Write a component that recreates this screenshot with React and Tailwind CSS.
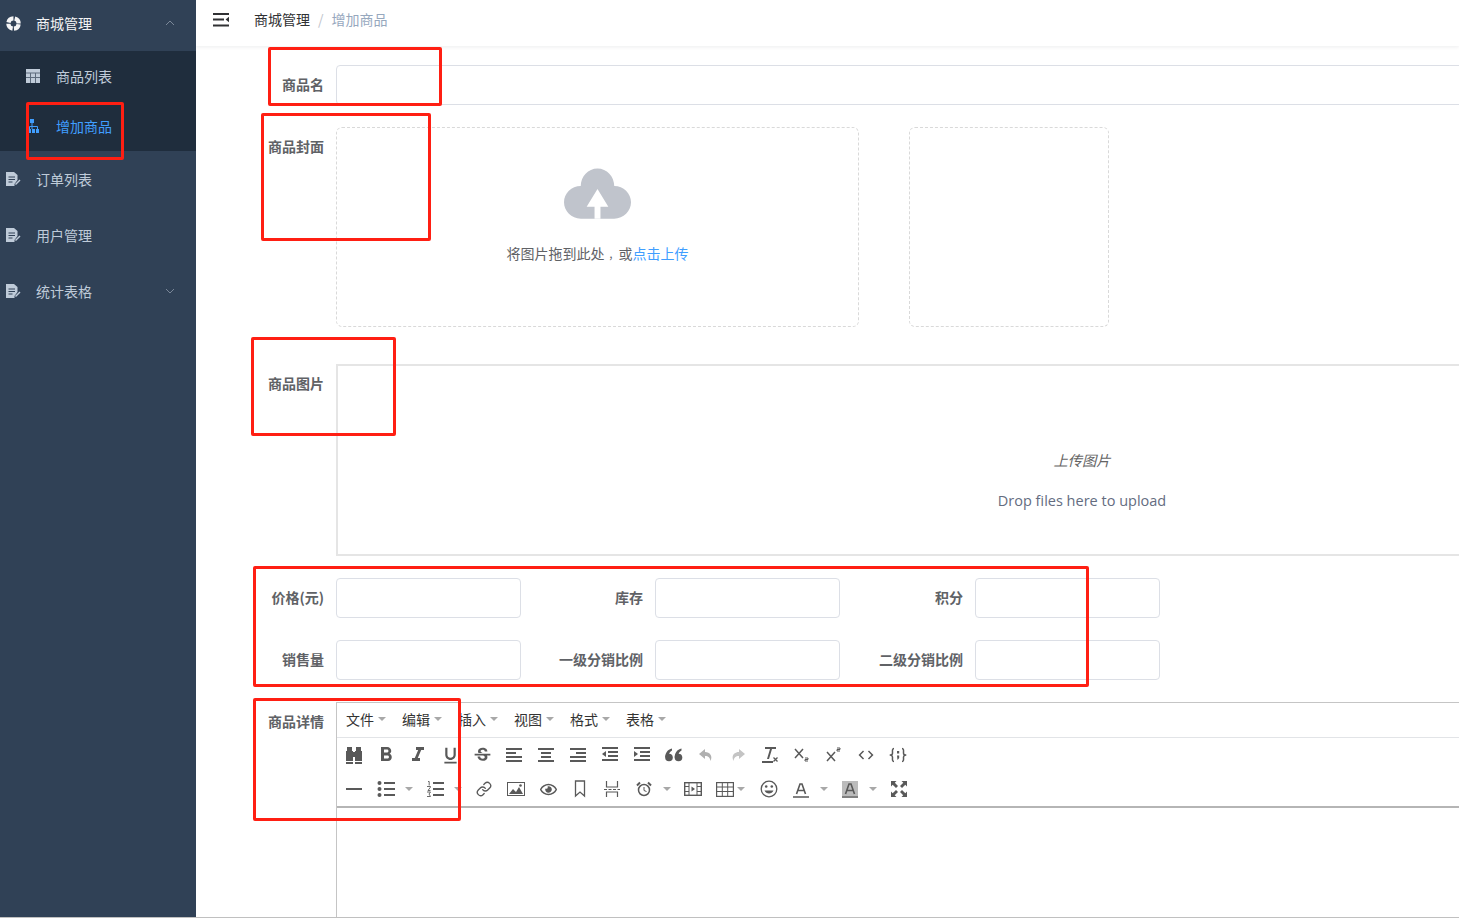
import React from "react";
import { MdFormatBold, MdFormatItalic, MdFormatUnderlined, MdStrikethroughS, MdCode } from "react-icons/md";
import { FaRegEye } from "react-icons/fa";
import { Link as LinkIcon } from "lucide-react";

const FONT = "font-['Noto_Sans_CJK_SC','Liberation_Sans',sans-serif]";
const C = "#595959";

function Ring() {
  return (
    <svg width="15" height="15" viewBox="0 0 16 16" className="shrink-0">
      <circle cx="8" cy="8" r="5.500" fill="none" stroke="#f4f4f5" strokeWidth="4.500" strokeDasharray="7.2 1.440" strokeDashoffset="-0.720" />
    </svg>
  );
}
function DocIcon() {
  return (
    <svg width="15" height="14" viewBox="0 0 15 14" className="shrink-0">
      <path d="M0 0h8l3.500 3v5l-3 4v2H0z" fill="#bfcbd9" />
      <path d="M2.500 5h6.500M2.500 7.500h6.500M2.500 10h4" stroke="#304156" strokeWidth="1" />
      <path d="M9 12l4.500-4.500 1 1L10 13z" fill="#bfcbd9" />
    </svg>
  );
}
function TableSide() {
  return (
    <svg width="14" height="14" viewBox="0 0 14 14" className="shrink-0">
      <rect width="14" height="14" fill="#bfcbd9" />
      <path d="M0 4h14M4.500 4v10M9.500 4v10M0 8.500h14" stroke="#5d6b7c" strokeWidth="1" />
    </svg>
  );
}
function SiteMap() {
  return (
    <svg width="11" height="14" viewBox="0 0 11 14" className="shrink-0">
      <rect x="2" y="0" width="4" height="4" fill="#409eff" />
      <rect x="0" y="10" width="3" height="4" fill="#409eff" />
      <rect x="4" y="10" width="3" height="4" fill="#409eff" />
      <rect x="8" y="10" width="3" height="4" fill="#409eff" />
      <path d="M1.500 10V7.500h8V10M4 4v6" stroke="#409eff" fill="none" />
    </svg>
  );
}
function Chevron({ up }) {
  return (
    <svg width="10" height="6" viewBox="0 0 10 6" className="shrink-0">
      <path d={up ? "M1 5l4-4 4 4" : "M1 1l4 4 4-4"} fill="none" stroke="#7a8798" strokeWidth="1" />
    </svg>
  );
}
function Hamburger() {
  return (
    <svg width="16" height="14" viewBox="0 0 16 14">
      <path d="M0 1h16M0 6.500h11M0 12.500h16" stroke="#303133" strokeWidth="2" />
      <path d="M16 3.800v5.400l-3.400-2.700z" fill="#303133" />
    </svg>
  );
}
function Cloud() {
  return (
    <svg width="67" height="51" viewBox="0 0 68 51">
      <path d="M17 51C7.600 51 0 43.600 0 34.500 0 25.400 7.600 18 17 18c0-10 7.600-18 17-18s17 8 17 18c9.400 0 17 7.400 17 16.500S60.400 51 51 51z" fill="#c0c4cc" />
      <path d="M34 21l11 18h-8v12h-6V39h-8z" fill="#fff" />
    </svg>
  );
}

function Binoculars() {
  return (
    <svg width="18" height="17" viewBox="0 0 18 17">
      <rect x="2" y="0" width="5" height="4" fill={C} />
      <rect x="11" y="0" width="5" height="4" fill={C} />
      <rect x="1" y="4" width="7" height="13" fill={C} />
      <rect x="10" y="4" width="7" height="13" fill={C} />
      <rect x="8" y="5" width="2" height="5" fill={C} />
      <rect x="1" y="14" width="7" height="1" fill="#fff" />
      <rect x="10" y="14" width="7" height="1" fill="#fff" />
    </svg>
  );
}
function Quote() {
  return (
    <svg width="18" height="14" viewBox="0 0 18 14">
      <g fill={C}>
        <circle cx="4" cy="9.500" r="3.800" />
        <path d="M.2 9.500C.2 5 2.500 1.500 7 .5v2C5 3.500 4 5.500 4 7z" />
        <circle cx="13.500" cy="9.500" r="3.800" />
        <path d="M9.700 9.500C9.700 5 12 1.500 16.500 .5v2c-2 1-3 3-3 4.500z" />
      </g>
    </svg>
  );
}
function Lines({ rows }) {
  return (
    <svg width="18" height="16" viewBox="0 0 18 16">
      {rows.map((r, i) => (
        <rect key={i} x={r[0]} y={r[1]} width={r[2]} height="2" fill={C} />
      ))}
    </svg>
  );
}
const alignLeft = [[1, 1, 16], [1, 5, 10], [1, 9, 16], [1, 13, 16]];
const alignCenter = [[1, 1, 16], [4, 5, 10], [4, 9, 10], [1, 13, 16]];
const alignRight = [[1, 1, 16], [7, 5, 10], [1, 9, 16], [1, 13, 16]];

function Indent({ out }) {
  return (
    <svg width="18" height="16" viewBox="0 0 18 16">
      <path d="M1 1h16M7 5h10M7 9h10M1 13h16" stroke={C} strokeWidth="2" />
      <path d={out ? "M5 4v6L1 7z" : "M1 4v6l4-3z"} fill={C} />
    </svg>
  );
}
function Undo({ color = "#b0b0b0" }) {
  return (
    <svg width="16" height="16" viewBox="0 0 16 16">
      <path d="M7 2L1 7l6 5V9c3.500 0 5 1.500 5.500 5C15 9 12 5 7 5z" fill={color} />
    </svg>
  );
}
function Redo() {
  return <span className="inline-flex -scale-x-100"><Undo color="#c4c4c4" /></span>;
}
function ClearFmt() {
  return (
    <svg width="18" height="18" viewBox="0 0 18 18">
      <path d="M4 1h11v2h-4L8 13H6L9 3H4zM1 15h11v2H1z" fill={C} />
      <path d="M12.500 11.500l4 4M16.500 11.500l-4 4" stroke={C} strokeWidth="1.300" />
    </svg>
  );
}
function Script({ sup }) {
  return (
    <svg width="16" height="16" viewBox="0 0 16 16">
      <path d={sup ? "M1 5l8 9M9 5l-8 9" : "M1 2l8 9M9 2l-8 9"} stroke={C} strokeWidth="1.500" fill="none" />
      <path d={sup ? "M11 1h3v1.500h-3V4h3" : "M11 11h3v1.500h-3V14h3"} stroke={C} strokeWidth="1" fill="none" />
    </svg>
  );
}
function CodeSample() {
  return (
    <svg width="18" height="16" viewBox="0 0 18 16">
      <path d="M5 1.500C3 1.500 3.500 4 3.500 6S2.500 8 1.500 8s2 0 2 2-.5 4.500 1.500 4.500M13 1.500c2 0 1.500 2.500 1.500 4.500s1 2 2 2-2 0-2 2 .5 4.500-1.500 4.500" fill="none" stroke={C} strokeWidth="1.500" />
      <rect x="8" y="4" width="2.200" height="2.500" fill={C} />
      <path d="M8 8.500h2.200v2.500L8.500 13z" fill={C} />
    </svg>
  );
}
function Hr() { return <svg width="18" height="16" viewBox="0 0 18 16"><rect x="1" y="7" width="16" height="2" fill={C} /></svg>; }
function Bullist() {
  return (
    <svg width="18" height="16" viewBox="0 0 18 16">
      <circle cx="2.500" cy="2" r="2" fill={C} /><circle cx="2.500" cy="8" r="2" fill={C} /><circle cx="2.500" cy="14" r="2" fill={C} />
      <path d="M7 2h11M7 8h11M7 14h11" stroke={C} strokeWidth="2" />
    </svg>
  );
}
function Numlist() {
  return (
    <svg width="18" height="16" viewBox="0 0 18 16">
      <path d="M2 .5h1.200v4M1 5.500h3.500v.6L2 9.500h2.500M1 11h3.500l-1.500 2 1.500 2.500H1" fill="none" stroke={C} strokeWidth="0.900" />
      <path d="M7 2h11M7 8h11M7 14h11" stroke={C} strokeWidth="2" />
    </svg>
  );
}
function Img() {
  return (
    <svg width="18" height="16" viewBox="0 0 18 16">
      <rect x=".5" y="1.500" width="17" height="13" fill="none" stroke={C} />
      <path d="M2 13l4-5 3 3 3-5 4 7z" fill={C} />
      <circle cx="13.500" cy="4.500" r="1.300" fill={C} />
    </svg>
  );
}
function Bookmark() {
  return <svg width="12" height="18" viewBox="0 0 12 18"><path d="M1.500 1h9v15l-4.500-4-4.500 4z" fill="none" stroke={C} strokeWidth="1.300" /></svg>;
}
function PageBreak() {
  return (
    <svg width="18" height="16" viewBox="0 0 18 16">
      <path d="M3.500 0v6h11V0M3.500 16v-5h11v5" fill="none" stroke={C} strokeWidth="1.200" />
      <path d="M1 8.500h16" stroke={C} strokeWidth="1.200" strokeDasharray="3 1.500" />
    </svg>
  );
}
function Clock() {
  return (
    <svg width="16" height="16" viewBox="0 0 16 16">
      <circle cx="8" cy="9" r="5.500" fill="none" stroke={C} strokeWidth="1.500" />
      <path d="M8 6v3.500l2.500 1" fill="none" stroke={C} />
      <path d="M1 4.500L4 1.500M15 4.500l-3-3" stroke={C} strokeWidth="2" />
    </svg>
  );
}
function Media() {
  return (
    <svg width="18" height="14" viewBox="0 0 18 14">
      <rect x=".7" y=".7" width="16.600" height="12.600" fill="none" stroke={C} strokeWidth="1.400" />
      <path d="M5 1v12M13 1v12M1 4.500h4M1 9.500h4M13 4.500h4M13 9.500h4" stroke={C} />
      <path d="M7.500 4.500v5l3.500-2.500z" fill={C} />
    </svg>
  );
}
function TableIcon() {
  return (
    <svg width="18" height="15" viewBox="0 0 18 15">
      <rect x=".6" y=".6" width="16.800" height="13.800" fill="none" stroke={C} strokeWidth="1.200" />
      <path d="M1 5h16M1 9.500h16M6.300 1v13M11.700 1v13" stroke={C} />
    </svg>
  );
}
function Smile() {
  return (
    <svg width="18" height="18" viewBox="0 0 18 18">
      <circle cx="9" cy="9" r="7.800" fill="none" stroke={C} strokeWidth="1.300" />
      <circle cx="6.200" cy="6.500" r="1.300" fill={C} /><circle cx="11.800" cy="6.500" r="1.300" fill={C} />
      <path d="M4.500 10.500c1.500 4 7.500 4 9 0z" fill={C} />
    </svg>
  );
}
function ForeColor() {
  return (
    <svg width="16" height="17" viewBox="0 0 16 17">
      <path d="M3.500 13L7 3h2l3.500 10M5 9.500h6" fill="none" stroke={C} strokeWidth="1.600" />
      <rect y="15" width="16" height="2" fill="#808080" />
    </svg>
  );
}
function BackColor() {
  return (
    <svg width="16" height="17" viewBox="0 0 16 17">
      <rect width="16" height="15" fill="#bbb" />
      <path d="M3.500 13L7 3h2l3.500 10M5 9.500h6" fill="none" stroke={C} strokeWidth="1.600" />
      <rect y="15" width="16" height="2" fill="#808080" />
    </svg>
  );
}
function Fullscreen() {
  return (
    <svg width="16" height="16" viewBox="0 0 16 16">
      <path d="M0 0h5.500L3.800 1.700 7 5 5 7 1.700 3.800 0 5.500zM16 0v5.500l-1.700-1.700L11 7 9 5l3.300-3.300L10.500 0zM0 16v-5.500l1.700 1.700L5 9l2 2-3.300 3.300L5.500 16zM16 16h-5.500l1.700-1.700L9 11l2-2 3.300 3.300 1.700-1.800z" fill={C} />
    </svg>
  );
}

function Caret({ color = "#a8a8a8" }) {
  return <span className="w-0 h-0 border-x-4 border-x-transparent border-t-4" style={{ borderTopColor: color }} />;
}

function Btn({ children, caret, wide }) {
  return (
    <div className={`${wide ? "w-[44px]" : caret ? "w-[49px]" : "w-[32px]"} h-[34px] flex items-center shrink-0`}>
      <div className="w-[32px] flex justify-center items-center">{children}</div>
      {caret && <div className={`${wide ? "-ml-[4px]" : "ml-[3px]"} flex`}><Caret /></div>}
    </div>
  );
}

function Side({ icon, text, chevron, up, h = "h-[56px]", color = "text-[#bfcbd9]" }) {
  return (
    <div className={`${h} flex items-center pl-[6px] pr-[21px] text-[14px] ${color}`}>
      <div className="w-[15px] flex justify-center">{icon}</div>
      <span className="ml-[15px] flex-1">{text}</span>
      {chevron && <Chevron up={up} />}
    </div>
  );
}

function SubItem({ icon, text, active }) {
  return (
    <div className={`h-[50px] flex items-center pl-[26px] text-[14px] ${active ? "text-[#409eff]" : "text-[#bfcbd9]"}`}>
      <div className="w-[14px] flex justify-center">{icon}</div>
      <span className="ml-[16px]">{text}</span>
    </div>
  );
}

function Label({ children }) {
  return <label className="w-[100px] shrink-0 pr-[12px] text-right text-[14px] font-bold text-[#606266] leading-[38px]">{children}</label>;
}
function Input({ w = "w-[185px]" }) {
  return <div className={`${w} h-[40px] shrink-0 border border-[#dcdfe6] rounded-[4px] bg-white`} />;
}
function Cell({ label }) {
  return (
    <div className="flex">
      <Label>{label}</Label>
      <Input />
    </div>
  );
}

function RedBox({ cls }) {
  return <div className={`absolute border-[3px] border-[#ff1f13] rounded-[2px] pointer-events-none ${cls}`} />;
}

const menus = ["文件", "编辑", "插入", "视图", "格式", "表格"];

export default function App() {
  return (
    <div className={`relative w-full h-[924px] overflow-hidden bg-white ${FONT}`}>
      <div className="h-[917px] flex overflow-hidden">
        <aside className="w-[196px] shrink-0 bg-[#304156]">
          <Side icon={<Ring />} text="商城管理" chevron up h="h-[51px] pb-[5px]" color="text-[#f4f4f5]" />
          <div className="bg-[#1f2d3d]">
            <SubItem icon={<TableSide />} text="商品列表" />
            <SubItem icon={<SiteMap />} text="增加商品" active />
          </div>
          <Side icon={<DocIcon />} text="订单列表" />
          <Side icon={<DocIcon />} text="用户管理" />
          <Side icon={<DocIcon />} text="统计表格" chevron />
        </aside>

        <main className="flex-1 min-w-0 overflow-hidden">
          <header className="h-[46px] flex items-center pl-[17px] pb-[7px] text-[14px] shadow-[0_1px_4px_rgba(0,21,41,0.08)]">
            <Hamburger />
            <span className="ml-[25px] text-[#303133]">商城管理</span>
            <span className="mx-[8px] text-[#c0c4cc]">/</span>
            <span className="text-[#97a8be]">增加商品</span>
          </header>

          <form className="pl-[40px] pt-[19px]">
            <div className="flex mb-[22px]">
              <Label>商品名</Label>
              <Input w="w-[1200px]" />
            </div>

            <div className="flex mb-[37px]">
              <Label>商品封面</Label>
              <div className="w-[523px] h-[200px] shrink-0 border border-dashed border-[#d9d9d9] rounded-[6px] flex flex-col items-center">
                <div className="mt-[40px] flex"><Cloud /></div>
                <div className="mt-[22px] text-[14px] leading-[24px] text-[#606266]">
                  将图片拖到此处<span className="inline-block w-[14px] pl-[4px] text-[10px]">，</span>或<em className="not-italic text-[#409eff]">点击上传</em>
                </div>
              </div>
              <div className="ml-[50px] w-[200px] h-[200px] shrink-0 border border-dashed border-[#d9d9d9] rounded-[6px]" />
            </div>

            <div className="flex mb-[22px]">
              <Label>商品图片</Label>
              <div className="w-[1492px] h-[192px] shrink-0 border-2 border-[#e5e5e5] flex flex-col items-center">
                <div className="mt-[84px] text-[14.3px] leading-[20px] italic text-[#646464]">上传图片</div>
                <div className="mt-[21px] text-[14.5px] leading-[20px] text-[#646c7f] font-['Open_Sans',sans-serif]">Drop files here to upload</div>
              </div>
            </div>

            <div className="grid grid-cols-[319px_320px_320px] gap-y-[22px] mb-[22px]">
              <Cell label="价格(元)" />
              <Cell label="库存" />
              <Cell label="积分" />
              <Cell label="销售量" />
              <Cell label="一级分销比例" />
              <Cell label="二级分销比例" />
            </div>

            <div className="flex">
              <Label>商品详情</Label>
              <div className="w-[1300px] h-[215px] shrink-0 border-l border-t border-[#c5c5c5] bg-white">
                <div className="h-[35px] pb-[2px] flex items-center pl-[9px] border-b border-[#e2e4e7] text-[14px] text-[#333]">
                  {menus.map((m) => (
                    <div key={m} className="w-[56px] flex items-center gap-[4px]">
                      <span>{m}</span>
                      <Caret />
                    </div>
                  ))}
                </div>
                <div className="border-b-2 border-[#b5b5b5] pl-[1px] h-[70px]">
                  <div className="flex">
                    <Btn><Binoculars /></Btn>
                    <Btn><MdFormatBold size={24} color={C} /></Btn>
                    <Btn><MdFormatItalic size={24} color={C} /></Btn>
                    <Btn><MdFormatUnderlined size={21} color={C} /></Btn>
                    <Btn><MdStrikethroughS size={21} color={C} /></Btn>
                    <Btn><Lines rows={alignLeft} /></Btn>
                    <Btn><Lines rows={alignCenter} /></Btn>
                    <Btn><Lines rows={alignRight} /></Btn>
                    <Btn><Indent out /></Btn>
                    <Btn><Indent /></Btn>
                    <Btn><Quote /></Btn>
                    <Btn><Undo /></Btn>
                    <Btn><Redo /></Btn>
                    <Btn><ClearFmt /></Btn>
                    <Btn><Script /></Btn>
                    <Btn><Script sup /></Btn>
                    <Btn><MdCode size={18} color={C} /></Btn>
                    <Btn><CodeSample /></Btn>
                  </div>
                  <div className="flex">
                    <Btn><Hr /></Btn>
                    <Btn caret><Bullist /></Btn>
                    <Btn caret><Numlist /></Btn>
                    <Btn><LinkIcon size={16} color={C} strokeWidth={2} /></Btn>
                    <Btn><Img /></Btn>
                    <Btn><FaRegEye size={17} color={C} /></Btn>
                    <Btn><Bookmark /></Btn>
                    <Btn><PageBreak /></Btn>
                    <Btn caret><Clock /></Btn>
                    <Btn><Media /></Btn>
                    <Btn caret wide><TableIcon /></Btn>
                    <Btn><Smile /></Btn>
                    <Btn caret><ForeColor /></Btn>
                    <Btn caret><BackColor /></Btn>
                    <Btn><Fullscreen /></Btn>
                  </div>
                </div>
              </div>
            </div>
          </form>
        </main>
      </div>
      <div className="h-px bg-[#c0c0c0]" />

      <RedBox cls="left-[268px] top-[47px] w-[174px] h-[59px]" />
      <RedBox cls="left-[261px] top-[113px] w-[170px] h-[128px]" />
      <RedBox cls="left-[26px] top-[102px] w-[98px] h-[58px]" />
      <RedBox cls="left-[251px] top-[337px] w-[145px] h-[99px]" />
      <RedBox cls="left-[253px] top-[566px] w-[836px] h-[121px]" />
      <RedBox cls="left-[253px] top-[698px] w-[208px] h-[123px]" />
    </div>
  );
}
